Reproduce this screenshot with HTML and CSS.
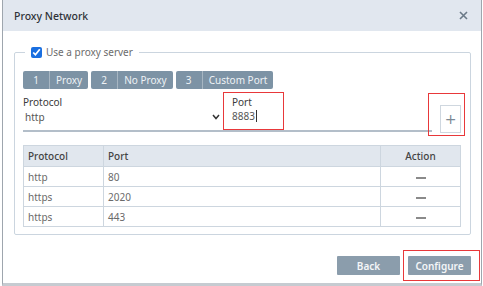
FILE: index.html
```html
<!DOCTYPE html>
<html lang="en">
  <head>
    <meta charset="UTF-8" />
    <meta name="viewport" content="width=device-width, initial-scale=1.0"/>
    <title>Proxy Network</title>
    <link rel="stylesheet" href="styles.css">
  </head>
  <body>
    <div class="dialog">
      <div class="dialog-header">
        <span class="dialog-title">Proxy Network</span>
        <svg class="close" width="9" height="9" viewBox="0 0 9 9">
          <path d="M1 1 L8 8 M8 1 L1 8" stroke="#6b7a88" stroke-width="1.6" fill="none"/>
        </svg>
      </div>

      <fieldset class="proxy-box">
        <legend>
          <label class="use-proxy"><input type="checkbox" checked> Use a proxy server</label>
        </legend>

        <div class="tabs">
          <div class="tab"><span class="tab-num">1</span><span class="tab-label">Proxy</span></div>
          <div class="tab"><span class="tab-num">2</span><span class="tab-label">No Proxy</span></div>
          <div class="tab"><span class="tab-num">3</span><span class="tab-label">Custom Port</span></div>
        </div>

        <div class="form-row">
          <div class="fields">
            <div class="field protocol">
              <div class="field-label">Protocol</div>
              <div class="select">
                <span>http</span>
                <svg width="8" height="6" viewBox="0 0 8 6">
                  <path d="M1 1 L4 4.5 L7 1" stroke="#333" stroke-width="1.5" fill="none"/>
                </svg>
              </div>
            </div>
            <div class="field port highlight">
              <div class="field-label">Port</div>
              <div class="value">8883<span class="caret"></span></div>
            </div>
          </div>
          <div class="add-wrap highlight">
            <button type="button" class="add">+</button>
          </div>
        </div>

        <table class="ports">
          <thead>
            <tr>
              <th class="col-protocol">Protocol</th>
              <th>Port</th>
              <th class="col-action">Action</th>
            </tr>
          </thead>
          <tbody>
            <tr><td>http</td><td>80</td><td class="col-action"><span class="minus"></span></td></tr>
            <tr><td>https</td><td>2020</td><td class="col-action"><span class="minus"></span></td></tr>
            <tr><td>https</td><td>443</td><td class="col-action"><span class="minus"></span></td></tr>
          </tbody>
        </table>
      </fieldset>

      <div class="dialog-footer">
        <button type="button" class="btn back">Back</button>
        <div class="btn-wrap highlight">
          <button type="button" class="btn">Configure</button>
        </div>
      </div>
    </div>
  </body>
</html>
```

FILE: styles.css
```css
html, body {
  margin: 0;
  background: #fff;
}

body {
  font-family: "Noto Sans", "Open Sans", sans-serif;
  font-size: 10px;
  color: #555;
}

.dialog {
  margin-left: 2px;
  width: 480px;
  height: 286px;
  box-sizing: border-box;
  border-left: 1px solid #9ea6ae;
  border-right: 1px solid #9ea6ae;
  border-bottom: 3px solid #c6cbd1;
  display: flex;
  flex-direction: column;
}

.dialog-header {
  height: 31px;
  background: #e1e7ef;
  display: flex;
  align-items: center;
  justify-content: space-between;
  padding: 0 13px 0 11px;
}

.dialog-title {
  font-size: 10.5px;
  font-weight: 500;
  color: #2f3338;
}

.highlight {
  border: 1px solid #e8383a;
  box-sizing: border-box;
}

/* fieldset */
.proxy-box {
  margin: 14px 10px 0 11px;
  padding: 12px 9px 7px 8px;
  border: 1px solid #cbd5df;
  border-radius: 2px;
  min-width: 0;
}

.proxy-box legend {
  margin-left: 2px;
  padding: 0 6px 0 6px;
  line-height: 14px;
}

.use-proxy {
  display: flex;
  align-items: center;
  gap: 4px;
  color: #6c6c6c;
  font-size: 10px;
}

.use-proxy input {
  width: 11px;
  height: 11px;
  margin: 0;
  accent-color: #1a6fe0;
}

/* step tabs */
.tabs {
  display: flex;
  gap: 3px;
}

.tab {
  display: flex;
  height: 18px;
  background: #7d93a5;
  border-radius: 2px;
  color: #eef2f5;
  line-height: 18px;
}

.tab-num {
  width: 26px;
  text-align: center;
  border-right: 1px solid #a7b6c2;
}

.tab-label {
  padding: 0 6px 0 6px;
}

/* inputs */
.form-row {
  display: flex;
  align-items: flex-start;
  margin-top: 3px;
}

.fields {
  flex: 1;
  display: flex;
  border-bottom: 2px solid #b3bec9;
}

.field {
  height: 38px;
  box-sizing: border-box;
  line-height: 14px;
}

.protocol {
  width: 200px;
  padding-top: 3px;
}

.select {
  display: flex;
  align-items: center;
  justify-content: space-between;
  padding: 1px 3px 0 2px;
  color: #555;
}

.port {
  width: 61px;
  padding: 2px 0 0 8px;
}

.field-label {
  color: #3a3a3a;
}

.value {
  color: #555;
  display: flex;
  align-items: center;
}

.caret {
  width: 1px;
  height: 12px;
  background: #333;
  margin-left: 1px;
}

.add-wrap {
  width: 37px;
  height: 43px;
  margin: 1px -4px 0 -4px;
  display: flex;
  justify-content: flex-end;
  align-items: flex-end;
  padding: 0 3px 2px 0;
}

.add {
  width: 21px;
  height: 28px;
  padding: 0;
  background: #fff;
  border: 1px solid #cfd7df;
  color: #7b8894;
  font-family: "DejaVu Sans", sans-serif;
  font-size: 14px;
  line-height: 1;
}

/* table */
.ports {
  width: 100%;
  margin-top: 9px;
  border-collapse: collapse;
  border: 1px solid #cdd6df;
}

.ports th,
.ports td {
  border: 1px solid #cdd6df;
  height: 19px;
  padding: 0 4px;
  text-align: left;
}

.ports th {
  background: #e1e7ee;
  color: #444;
  font-weight: 500;
  height: 20px;
}

.ports td {
  color: #6a6a6a;
}

.col-protocol {
  width: 71px;
}

.ports .col-action {
  width: 71px;
  text-align: center;
}

.minus {
  display: inline-block;
  width: 10px;
  height: 2px;
  background: #8a8a8a;
  vertical-align: middle;
}

/* footer */
.dialog-footer {
  display: flex;
  justify-content: flex-end;
  align-items: center;
  margin-top: 15px;
  padding-right: 1px;
}

.btn-wrap {
  height: 31px;
  display: flex;
  align-items: center;
  padding: 0 8px 0 4px;
}

.btn {
  width: 63px;
  height: 19px;
  padding: 0;
  border: none;
  border-radius: 1px;
  background: #8b9dac;
  color: #f4f6f8;
  font-family: "Noto Sans", sans-serif;
  font-size: 10px;
  font-weight: 600;
}

.back {
  margin-right: 3px;
}
```
